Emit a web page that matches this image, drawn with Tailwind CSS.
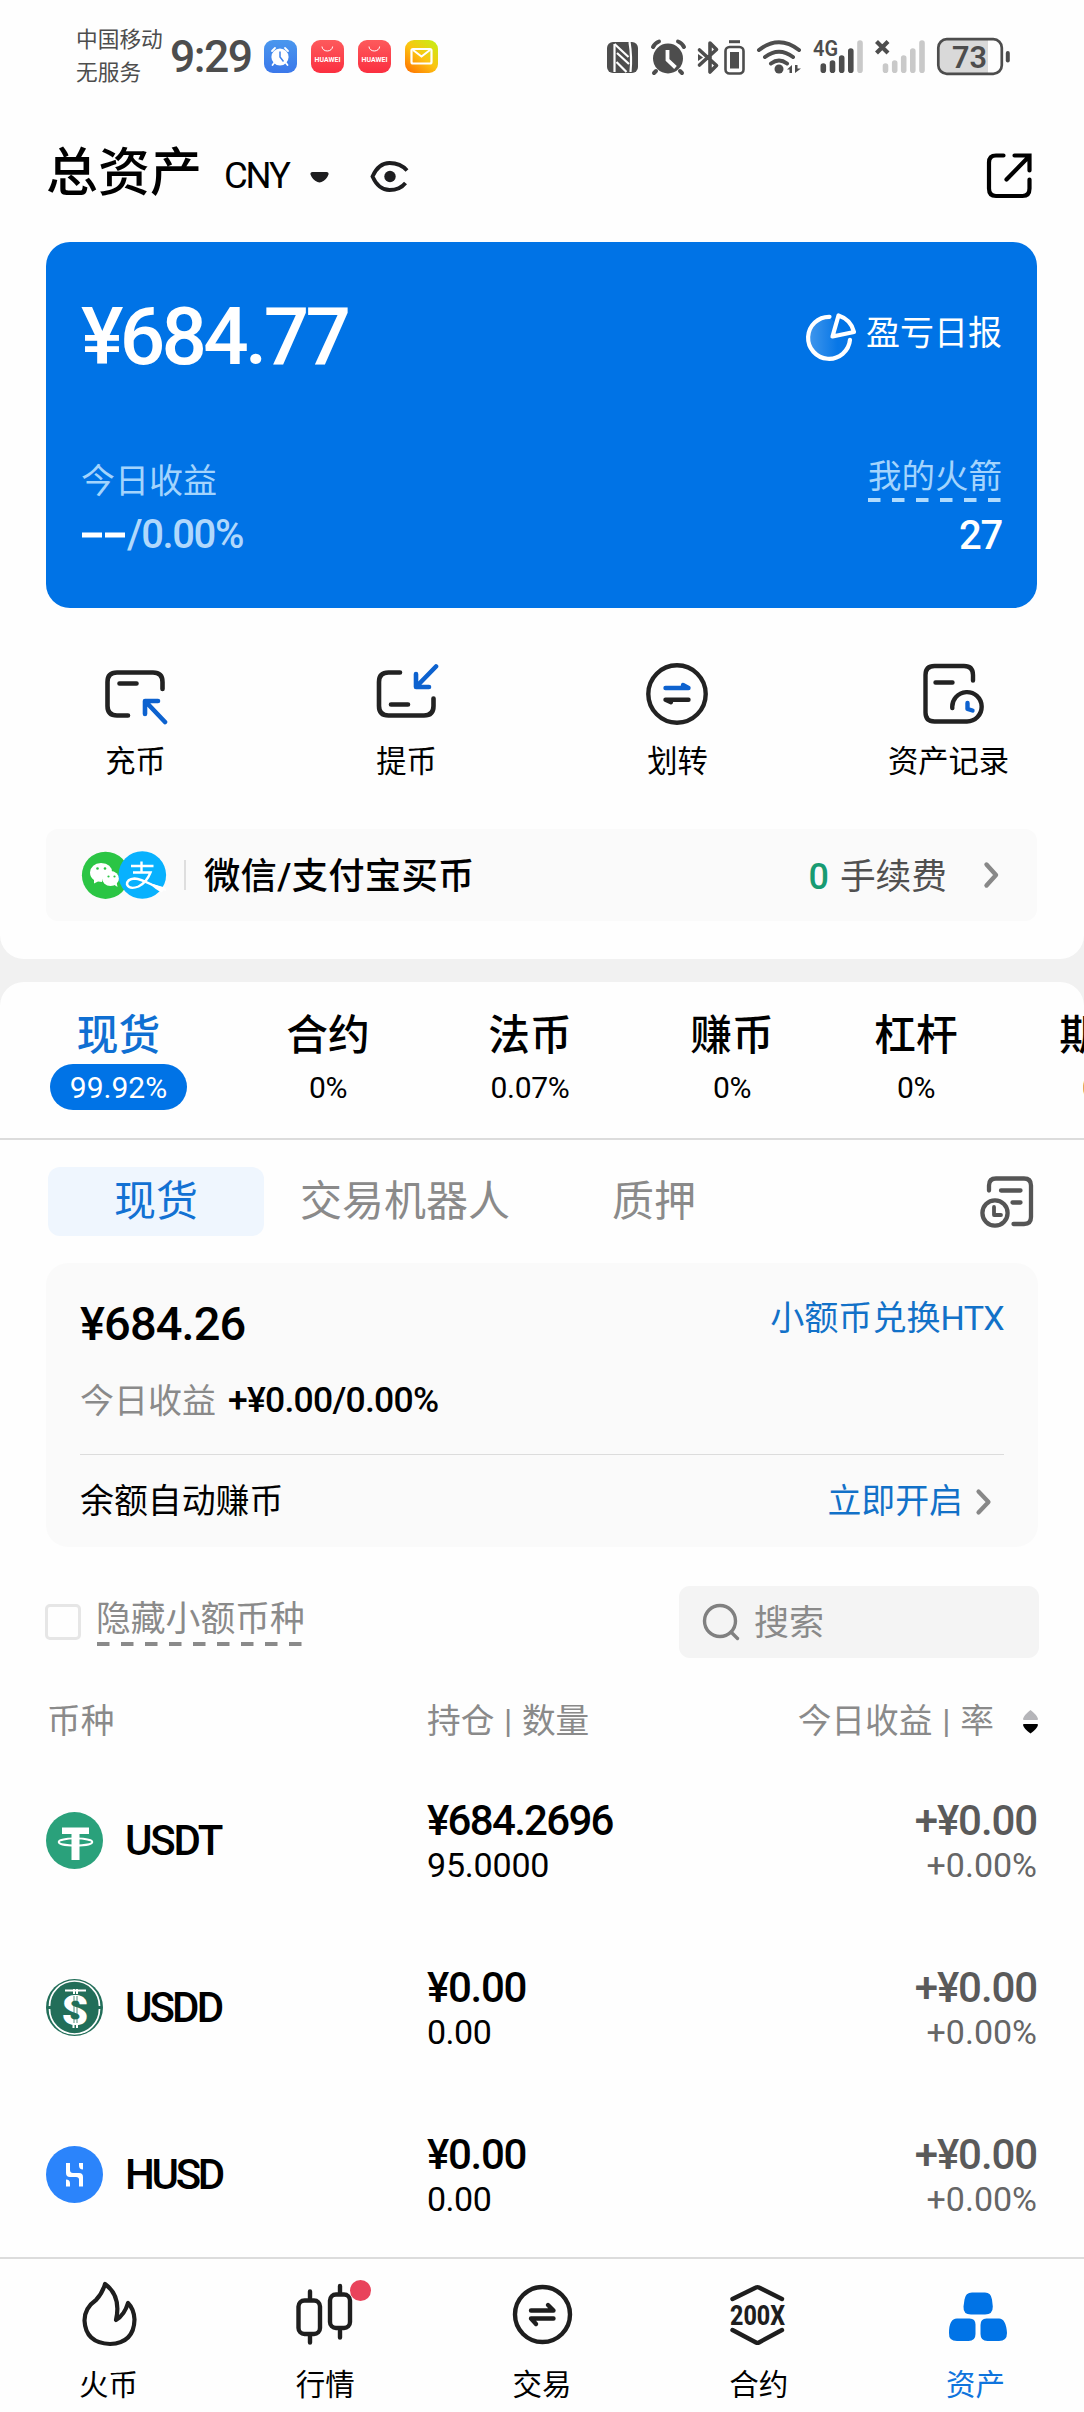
<!DOCTYPE html>
<html lang="zh-CN">
<head>
<meta charset="utf-8">
<title>总资产</title>
<script src="https://cdn.jsdelivr.net/npm/@tailwindcss/browser@4"></script>
</head>
<body class="bg-[#f1f1f1]">
<div class="flex h-[2412px] w-[1084px] flex-col overflow-hidden bg-[#f1f1f1] font-['Roboto','Noto_Sans_CJK_SC',sans-serif] whitespace-nowrap text-black">

  <!-- Overview panel -->
  <section class="flex h-[959px] flex-none flex-col rounded-b-[24px] bg-[#fefefe]">

    <!-- Status bar -->
    <div class="flex h-[113px] flex-none items-center pl-[76px] text-[#4d4d4d]">
      <div class="w-[94px] pb-[1px] text-[21.700px] leading-[33px]"><div>中国移动</div><div>无服务</div></div>
      <div class="w-[94px] pt-[2px] text-[44.500px] leading-none font-medium tracking-[-1.500px]">9:29</div>
      <div class="flex gap-[14px]">
        <svg class="size-[33px]" viewBox="0 0 33 33"><defs><linearGradient id="ck" x1="0" y1="0" x2="0" y2="1"><stop offset="0" stop-color="#4a97ee"/><stop offset="1" stop-color="#3b78ea"/></linearGradient></defs><rect width="33" height="33" rx="9" fill="url(#ck)"/><circle cx="16" cy="17" r="8.6" fill="#fff"/><path d="M8 11l3-3M24 11l-3-3M10 23l-1.500 2M22 23l1.500 2" stroke="#fff" stroke-width="1.800" stroke-linecap="round"/><path d="M16 11.500v5.500l3.500 4.500" fill="none" stroke="#3f83ec" stroke-width="1.500"/></svg>
        <svg class="size-[33px]" viewBox="0 0 33 33"><defs><linearGradient id="hw" x1="0" y1="0" x2="0" y2="1"><stop offset="0" stop-color="#fd5a5c"/><stop offset="1" stop-color="#fb2f40"/></linearGradient></defs><rect width="33" height="33" rx="9" fill="url(#hw)"/><path d="M11 6.500a5.300 4.500 0 0 0 10.600 0" fill="none" stroke="#fff" stroke-width="1"/><text x="3.500" y="21.500" textLength="26" lengthAdjust="spacingAndGlyphs" font-size="6.500" font-weight="700" fill="#fff">HUAWEI</text></svg>
        <svg class="size-[33px]" viewBox="0 0 33 33"><rect width="33" height="33" rx="9" fill="url(#hw)"/><path d="M11 6.500a5.300 4.500 0 0 0 10.600 0" fill="none" stroke="#fff" stroke-width="1"/><text x="3.500" y="21.500" textLength="26" lengthAdjust="spacingAndGlyphs" font-size="6.500" font-weight="700" fill="#fff">HUAWEI</text></svg>
        <svg class="size-[33px]" viewBox="0 0 33 33"><defs><linearGradient id="ml" x1="0.100" y1="1" x2="0.900" y2="0"><stop offset="0" stop-color="#ff7300"/><stop offset=".5" stop-color="#fcc412"/><stop offset="1" stop-color="#c6ee16"/></linearGradient></defs><rect width="33" height="33" rx="9" fill="url(#ml)"/><rect x="6.500" y="9" width="20" height="14.500" rx="1.500" fill="none" stroke="#fff" stroke-width="2.200"/><path d="M8 10l8.500 6.500L25 10" fill="none" stroke="#fff" stroke-width="2"/></svg>
      </div>
      <!-- Connectivity and battery -->
      <svg class="ml-[162px] h-[44px] w-[420px]" viewBox="600 34 420 44" fill="none">
        <rect x="607" y="41" width="31" height="31" rx="6" fill="#4d4d4d"/>
        <path d="M614.500 43v28M629.500 41q2.500 15 1 30" stroke="#fefefe" stroke-width="2.200"/>
        <path d="M614.500 43l14 13M617 52l12 11M616.500 61l10 10" stroke="#fefefe" stroke-width="2.200"/>
        <circle cx="668" cy="57.500" r="15" fill="#4d4d4d"/><path d="M653 46q2-4 6-5.500M684 46q-2-4-6-5.500M656 70l-2 2M680 70l2 2" stroke="#4d4d4d" stroke-width="4" stroke-linecap="round"/><path d="M667.500 49v10l8 7.500" stroke="#fefefe" stroke-width="3.800"/>
        <path d="M699.500 49l17 15.500-6.500 6.500v-29l6.500 6.500-17 15.500" stroke="#4d4d4d" stroke-width="3.600" stroke-linejoin="round" stroke-linecap="round"/><path d="M698 53l5 3.500-5 3.500z" fill="#4d4d4d"/>
        <path d="M729 40.700h11" stroke="#4d4d4d" stroke-width="3"/><rect x="725.500" y="46" width="18" height="26.500" rx="4" stroke="#4d4d4d" stroke-width="2.600"/><rect x="730" y="51" width="9" height="16.500" fill="#4d4d4d"/>
        <path d="M759 49q20-15.500 40 0M765 56q14-10.500 28 0M771 62.500q8-6 16 0" stroke="#4d4d4d" stroke-width="4" stroke-linecap="round"/><circle cx="779" cy="68" r="4.500" fill="#4d4d4d"/>
        <path d="M787 68.500l5-4.500v8h-2.500v-3.500zM795 64v8l6-4.500h-3.500v-3.500z" fill="#4d4d4d"/>
        <text x="813" y="55" textLength="25" lengthAdjust="spacingAndGlyphs" font-size="22.500" font-weight="600" fill="#4d4d4d">4G</text>
        <g stroke-width="5.600" stroke-linecap="round"><path d="M823.300 65v4.300M832.500 62v7.300M841.700 57v12.300M850.800 50v19.300" stroke="#4d4d4d"/><path d="M860 42v27.300M885.500 65v4.300M894.700 62v7.300M903.700 57v12.300M912.800 50v19.300M922 42v27.300" stroke="#c9c9c9"/></g>
        <path d="M876.500 40.500l11.500 11.500M888 40.500l-11.500 11.500" stroke="#4d4d4d" stroke-width="4.200"/>
        <path d="M988 39h-40q-9 0-9 9v15q0 9 9 9h40z" fill="#d9d9d9"/>
        <rect x="938.300" y="38.200" width="63.500" height="34.600" rx="8.500" stroke="#4d4d4d" stroke-width="2.700"/><path d="M1007.800 52v7.500" stroke="#4d4d4d" stroke-width="4" stroke-linecap="round"/>
        <text x="952" y="66.500" textLength="35" lengthAdjust="spacingAndGlyphs" font-size="31" font-weight="600" fill="#4d4d4d">73</text>
      </svg>
    </div>

    <!-- Title -->
    <header class="flex h-[124px] flex-none items-center pl-[46px]">
      <h1 class="w-[178px] pb-[3px] text-[52px] leading-[70px] font-medium">总资产</h1>
      <div class="w-[86px] pt-[2px] text-[36.500px] leading-[50px] tracking-[-2.200px]">CNY</div>
      <svg class="mt-[1px] h-[40px] w-[110px]" viewBox="310 155 110 40" fill="none"><path d="M312.500 171h14q2.500 0 2 2.500-2 5.500-7 7.500-2 .8-4 0-5-2-7-7.500-.5-2.500 2-2.500z" fill="#1d1d1f"/><path d="M407 169.500q-6.500-7.500-17.500-7.500t-17 13.500q6 13.500 17 13.500 10.500 0 16-7" stroke="#1d1d1f" stroke-width="3.800"/><circle cx="390" cy="175.500" r="5.700" fill="#1d1d1f"/></svg>
      <svg class="ml-[566px] h-[47px] w-[47px]" viewBox="986 152 47 47" fill="none" stroke="#000" stroke-width="4.200" stroke-linecap="round"><path d="M1003.500 155.500h-7.500q-7 0-7 7v26q0 7.500 7 7.500h26.500q7 0 7-7.500v-9M1014.500 155.500h15v15M1028.500 157l-22 22.500"/></svg>
    </header>

    <!-- Balance card -->
    <div class="mt-[5px] ml-[46px] h-[366px] w-[991px] flex-none rounded-[24px] bg-[#0073e6] px-[35px] pt-[55px] text-white">
      <div class="flex h-[80px] items-center justify-between">
        <div class="text-[80px] leading-[80px] font-medium tracking-[-3.700px]">¥684.77</div>
        <div class="flex items-center">
          <svg class="h-[50px] w-[52px]" viewBox="805 312 52 50" fill="none" stroke="#fff" stroke-width="4.200" stroke-linecap="round" stroke-linejoin="round"><defs><linearGradient id="pie"><stop offset="0" stop-color="#fff" stop-opacity=".26"/><stop offset=".7" stop-color="#fff" stop-opacity=".03"/></linearGradient></defs><path d="M829.500 316.800a21 21 0 1 0 20.500 23" fill="url(#pie)"/><path d="M838.500 315.500l-6 21 21.500-4.500q-3-12.500-15.500-16.500z"/></svg>
          <span class="ml-[9px] pb-[8px] text-[34px] leading-[40px]">盈亏日报</span>
        </div>
      </div>
      <div class="mt-[80px] flex justify-between">
        <div>
          <div class="pt-[4px] text-[34px] leading-[40px] text-[#a3d4fd]">今日收益</div>
          <div class="mt-[9px] flex h-[50px] items-center text-[40px] leading-[50px] font-medium tracking-[-1.400px] text-[#b0d8fc]"><svg class="mr-[1px] h-[6px] w-[45px]" viewBox="0 0 45 6"><path d="M1 3h20M24 3h20" stroke="#fff" stroke-width="5"/></svg>/0.00%</div>
        </div>
        <div class="flex flex-col items-end">
          <div class="text-[33.500px] leading-[40px] text-[#a3d4fd]">我的火箭</div>
          <svg class="mt-[1px] h-[4px] w-[134px]" viewBox="0 0 134 4"><path d="M0 2h134" stroke="#b0dbfd" stroke-width="4" stroke-dasharray="12.500 11.500"/></svg>
          <div class="mt-[9px] text-[40px] leading-[50px] font-medium tracking-[-1.200px]">27</div>
        </div>
      </div>
    </div>

    <!-- Actions -->
    <div class="mt-[55px] grid grid-cols-4 text-center text-[30.300px] leading-[40px]">
      <div class="flex flex-col items-center gap-[17px]"><svg class="h-[62px] w-[64px]" viewBox="104 663 64 62" fill="none" stroke="#222" stroke-width="4.600" stroke-linecap="round" stroke-linejoin="round"><path d="M128 715.500h-11q-9.500 0-9.500-9.500v-24q0-9.500 9.500-9.500h36q9.500 0 9.500 9.500v7M119.500 683.500h17"/><path d="M145 714v-13h13M146 702l19 20" stroke="#0d62cf"/></svg>充币</div>
      <div class="flex flex-col items-center gap-[17px]"><svg class="h-[62px] w-[64px]" viewBox="375 663 64 62" fill="none" stroke="#222" stroke-width="4.600" stroke-linecap="round" stroke-linejoin="round"><path d="M400 672.500h-11.500q-9.500 0-9.500 9.500v24q0 9.500 9.500 9.500h35.500q9.500 0 9.500-9.500v-7.500M391 704.500h17"/><path d="M416 674v13h13M417 686l19-19.500" stroke="#0d62cf"/></svg>提币</div>
      <div class="flex flex-col items-center gap-[17px]"><svg class="h-[62px] w-[64px]" viewBox="646 663 64 62" fill="none" stroke="#222" stroke-width="4.400" stroke-linecap="round" stroke-linejoin="round"><circle cx="677" cy="694" r="28.700"/><path d="M665.500 688h23l-5.500-3" stroke="#0d62cf"/><path d="M688.500 699.700h-23l5.500 2.500"/></svg>划转</div>
      <div class="flex flex-col items-center gap-[17px]"><svg class="h-[62px] w-[70px]" viewBox="913 663 70 62" fill="none" stroke="#222" stroke-width="4.400" stroke-linecap="round" stroke-linejoin="round"><path d="M972 680.500v-5.500q0-9-9-9h-29.500q-9 0-9 9v37.500q0 9 9 9h32.500a14.700 14.700 0 1 0-14.700-13.500M934.500 682.500h17"/><path d="M966.500 703v6l5 1.500" stroke="#0d62cf"/></svg>资产记录</div>
    </div>

    <!-- Buy banner -->
    <div class="mt-[47px] ml-[46px] flex h-[92px] w-[991px] flex-none items-center rounded-[12px] bg-[#fafafa] pl-[35px]">
      <svg class="h-[50px] w-[108px]" viewBox="81 850 108 50" fill="none">
        <circle cx="105.500" cy="875.300" r="23.600" fill="#2bc544"/>
        <path d="M101 863q11 .5 11 9.500-11 2-10 9.500l-4-.5-4 2v-3.500q-4-3-4-7.500 1-9 11-9.500z" fill="#fff"/>
        <ellipse cx="110.500" cy="878.500" rx="8.500" ry="7.500" fill="#fff"/><path d="M113 884l4.500 3-1-5z" fill="#fff"/>
        <circle cx="97.500" cy="868.500" r="1.300" fill="#2bc544"/><circle cx="105" cy="868.500" r="1.300" fill="#2bc544"/><circle cx="108.500" cy="876.500" r="1.100" fill="#2bc544"/><circle cx="114.500" cy="876.500" r="1.100" fill="#2bc544"/>
        <circle cx="142.300" cy="875" r="23.800" fill="#08b1fe"/>
        <path d="M141.500 861.500v10M131 866h22.500M133 872.500h17.500q-4 10-12 14-9 3.500-11.500-2 0-5.500 7.500-6 6 .5 17 6l14.500 5.500" stroke="#fff" stroke-width="2.400"/><path d="M149 883l16 4.500-3 5q-7-3-13-9.500z" fill="#fff"/>
        <path d="M185 860v30" stroke="#dedede" stroke-width="2"/>
      </svg>
      <span class="ml-[15px] pt-[3px] text-[36.300px] leading-[50px] font-medium tracking-[0.300px]">微信/支付宝买币</span>
      <span class="ml-auto pt-[3px] text-[36px] leading-[50px] font-medium text-[#179b72]">0</span>
      <span class="ml-[11px] pt-[3px] text-[35.700px] leading-[50px] text-[#505050]">手续费</span>
      <svg class="mr-[37px] ml-[36px] h-[28px] w-[17px]" viewBox="0 0 17 28" fill="none"><path d="M3.500 3.500l9.500 10.500-9.500 10.500" stroke="#888" stroke-width="4.400" stroke-linecap="round" stroke-linejoin="round"/></svg>
    </div>
  </section>

  <!-- Holdings panel -->
  <section class="mt-[23px] flex min-h-0 flex-1 flex-col rounded-t-[24px] bg-[#fefefe]">

    <!-- Account tabs -->
    <div class="flex h-[158px] flex-none overflow-hidden border-b-2 border-[#dcdcdc] pt-[29px] pl-[50px] text-center text-[41.700px] leading-[50px] font-medium">
      <div class="w-[137px] flex-none text-[#0f6fd2]">现货<div class="mt-[3px] h-[46px] rounded-full bg-[#0073e6] text-[30px] leading-[47px] font-normal text-white">99.92%</div></div>
      <div class="ml-[99px] w-[84px] flex-none">合约<div class="mt-[3px] text-[30px] leading-[47px] font-normal tracking-[-0.500px]">0%</div></div>
      <div class="ml-[118px] w-[84px] flex-none">法币<div class="mt-[3px] text-[30px] leading-[47px] font-normal tracking-[-0.300px]">0.07%</div></div>
      <div class="ml-[118px] w-[84px] flex-none">赚币<div class="mt-[3px] text-[30px] leading-[47px] font-normal tracking-[-0.500px]">0%</div></div>
      <div class="ml-[100px] w-[84px] flex-none">杠杆<div class="mt-[3px] text-[30px] leading-[47px] font-normal tracking-[-0.500px]">0%</div></div>
      <div class="ml-[101px] w-[84px] flex-none">期权<div class="mt-[3px] text-[30px] leading-[47px] font-normal tracking-[-0.500px]">0%</div></div>
    </div>

    <!-- Sub tabs -->
    <div class="mt-[27px] flex h-[69px] flex-none items-center pl-[48px] text-[42px] leading-[70px] text-[#8a8a8a]">
      <div class="h-[69px] w-[216px] rounded-[12px] bg-[#eff6fe] text-center text-[#1271d3]">现货</div>
      <div class="ml-[36px]">交易机器人</div>
      <div class="ml-[102px]">质押</div>
      <svg class="ml-auto mr-[50px] h-[54px] w-[55px]" viewBox="979 1175 55 54" fill="none" stroke="#555" stroke-width="4.300" stroke-linecap="round" stroke-linejoin="round"><path d="M989 1190.500v-5q0-7 7-7h28q7 0 7 7v31.500q0 7-7 7h-10.500M1001 1190.500h19.500M1012.500 1202.500h8"/><circle cx="995" cy="1213" r="12.600"/><path d="M994 1207v8h7" stroke-width="3.800"/></svg>
    </div>

    <!-- Spot summary -->
    <div class="mx-auto mt-[27px] h-[284px] w-[992px] flex-none rounded-[22px] bg-[#fafafa] px-[34px] pt-[36px]">
      <div class="flex h-[50px] justify-between">
        <div class="text-[47px] leading-[50px] font-medium tracking-[-0.900px]">¥684.26</div>
        <div class="text-[34.100px] leading-[39px] text-[#1271c8]">小额币兑换<span class="tracking-[-0.700px]">HTX</span></div>
      </div>
      <div class="mt-[26px] flex h-[50px] text-[34px] leading-[52px] text-[#8a8a8a]">今日收益<span class="ml-[12px] text-[35.500px] leading-[50px] font-medium tracking-[-0.750px] text-black">+¥0.00/0.00%</span></div>
      <div class="mt-[29px] flex h-[93px] items-center border-t border-[#dcdcdc] pt-[1px] text-[33.900px] leading-[50px]">
        <span>余额自动赚币</span><span class="ml-auto text-[#1271c8]">立即开启</span>
        <svg class="mr-[11px] ml-[11px] h-[28px] w-[19px]" viewBox="0 0 19 28" fill="none"><path d="M4.500 3.500l10 10.500-10 10.500" stroke="#888" stroke-width="4.200" stroke-linecap="round" stroke-linejoin="round"/></svg>
      </div>
    </div>

    <!-- Filter -->
    <div class="mt-[39px] flex h-[72px] flex-none items-center pr-[45px] pl-[45px] text-[34.800px] text-[#8a8a8a]">
      <div class="size-[36px] rounded-[5px] border-3 border-[#e6e6e6]"></div>
      <div class="ml-[15px] flex h-[48px] flex-col justify-between">
        <div class="leading-[43px]">隐藏小额币种</div>
        <svg class="h-[4px] w-[207px]" viewBox="0 0 207 4"><path d="M1 2h206" stroke="#8a8a8a" stroke-width="4" stroke-dasharray="12.500 11.500"/></svg>
      </div>
      <div class="ml-auto flex h-[72px] w-[360px] items-center rounded-[11px] bg-[#f4f4f4] pl-[23px] text-[35px] leading-[50px]">
        <svg class="size-[38px]" viewBox="0 0 38 38" fill="none" stroke="#808080" stroke-width="3.400" stroke-linecap="round"><circle cx="18" cy="18" r="15.500"/><path d="M29 29l6.500 6.500"/></svg>
        <span class="ml-[14px] pt-[3px]">搜索</span>
      </div>
    </div>

    <!-- Coin list -->
    <div class="mt-[44px] flex h-[40px] flex-none items-center pr-[45px] pl-[47px] text-[33.700px] leading-[40px] text-[#8a8a8a]">
      <div class="w-[380px]">币种</div><div class="[word-spacing:1.3px]">持仓 | 数量</div><div class="ml-auto [word-spacing:1.5px]">今日收益 | 率</div>
      <svg class="ml-[28px] h-[26px] w-[17px]" viewBox="0 0 17 26"><path d="M1 10q1-4 7.500-9 6.500 5 7.500 9 0 1-1 1H2q-1 0-1-1z" fill="#b5b5b9"/><path d="M1 16q1 4 7.500 8.500 6.500-4.500 7.500-8.500 0-1-1-1H2q-1 0-1 1z" fill="#000"/></svg>
    </div>
    <div class="min-h-0 flex-1 overflow-hidden pt-[15px]">
      <div class="flex h-[167px] items-center pr-[47px] pl-[46px]">
        <svg class="size-[57px]" viewBox="0 0 57 57"><circle cx="28.500" cy="28.500" r="28.500" fill="#2aa17b"/><ellipse cx="29.500" cy="30" rx="16.800" ry="3.600" fill="none" stroke="#fff" stroke-width="1.900"/><path d="M16 15.500h27v6.500h-9.500v26h-8v-26H16z" fill="#fff"/></svg>
        <div class="ml-[22px] w-[302px] text-[42px] leading-[50px] font-medium tracking-[-2.200px]">USDT</div>
        <div class="pt-[5px]"><div class="text-[42px] leading-[45px] font-medium tracking-[-1.700px]">¥684.2696</div><div class="text-[34px] leading-[45px] tracking-[-0.200px]">95.0000</div></div>
        <div class="ml-auto pt-[5px] text-right text-[#5a5a5a]"><div class="text-[42px] leading-[45px] font-medium tracking-[-1.100px]">+¥0.00</div><div class="text-[34px] leading-[45px] text-[#666]">+0.00%</div></div>
      </div>
      <div class="flex h-[167px] items-center pr-[47px] pl-[46px]">
        <svg class="size-[57px]" viewBox="0 0 57 57"><circle cx="28.500" cy="28.500" r="28.500" fill="#226e59"/><path d="M3.500 27a25 25 0 0 1 50 0M3.500 30a25 25 0 0 0 50 0" fill="none" stroke="#fff" stroke-width="1.700"/><path d="M19 11.500h21M28 10v5M31 10v5M27.500 44v5M31 44v5" stroke="#fff" stroke-width="2"/><text x="16" y="45.500" textLength="26" lengthAdjust="spacingAndGlyphs" font-size="42" font-weight="900" fill="#fff">S</text><path d="M28 17v27M31 17v27" stroke="#226e59" stroke-width=".8"/></svg>
        <div class="ml-[22px] w-[302px] text-[42px] leading-[50px] font-medium tracking-[-2.900px]">USDD</div>
        <div class="pt-[5px]"><div class="text-[42px] leading-[45px] font-medium tracking-[-1.300px]">¥0.00</div><div class="text-[34px] leading-[45px] tracking-[-0.500px]">0.00</div></div>
        <div class="ml-auto pt-[5px] text-right text-[#5a5a5a]"><div class="text-[42px] leading-[45px] font-medium tracking-[-1.100px]">+¥0.00</div><div class="text-[34px] leading-[45px] text-[#666]">+0.00%</div></div>
      </div>
      <div class="flex h-[167px] items-center pr-[47px] pl-[46px]">
        <svg class="size-[57px]" viewBox="0 0 57 57"><circle cx="28.500" cy="28.500" r="28.500" fill="#2b84fb"/><path d="M20 17h4v7q0 3 3 3h6q4 0 4 4v9.500h-4v-7q0-2.500-3-2.500h-6q-4 0-4-4zM33 17h4v6.500q-4 0-4-4zM20 33.500q4 0 4 4v3h-4z" fill="#fff"/></svg>
        <div class="ml-[22px] w-[302px] text-[42px] leading-[50px] font-medium tracking-[-3.300px]">HUSD</div>
        <div class="pt-[5px]"><div class="text-[42px] leading-[45px] font-medium tracking-[-1.300px]">¥0.00</div><div class="text-[34px] leading-[45px] tracking-[-0.500px]">0.00</div></div>
        <div class="ml-auto pt-[5px] text-right text-[#5a5a5a]"><div class="text-[42px] leading-[45px] font-medium tracking-[-1.100px]">+¥0.00</div><div class="text-[34px] leading-[45px] text-[#666]">+0.00%</div></div>
      </div>
    </div>

    <!-- Bottom navigation -->
    <nav class="grid h-[155px] flex-none grid-cols-5 border-t-2 border-[#dcdcdc] pt-[20px] text-center text-[29.500px] leading-[40px]">
      <div class="flex flex-col items-center gap-[18px]"><svg class="h-[68px] w-[100px]" viewBox="58 2278 100 68" fill="none" stroke="#1e1e1e" stroke-width="4.200" stroke-linejoin="round"><path d="M105 2283q-2.500 9-9 16-11.500 8-11.500 20.500 1 22.500 25.500 23.500 24-1 24.500-24.500-.5-10.500-6.500-16.500-3.500 12-12 17 5.500-24-11-36z"/></svg>火币</div>
      <div class="flex flex-col items-center gap-[18px]"><svg class="h-[68px] w-[100px]" viewBox="275 2278 100 68" fill="none" stroke="#1e1e1e" stroke-width="4.400" stroke-linecap="round"><rect x="298.500" y="2299.500" width="21.500" height="33.500" rx="6"/><path d="M310 2290.500v7M310 2335v6.500"/><rect x="330" y="2293.500" width="20" height="33.500" rx="6"/><path d="M340 2285v7M340 2329.500v7"/><circle cx="360.500" cy="2289.500" r="10.500" fill="#e9435b" stroke="none"/></svg>行情</div>
      <div class="flex flex-col items-center gap-[18px]"><svg class="h-[68px] w-[100px]" viewBox="492 2278 100 68" fill="none" stroke="#1e1e1e" stroke-width="4.400" stroke-linecap="round" stroke-linejoin="round"><circle cx="542.500" cy="2313.500" r="27.500"/><path d="M531 2309.500h22.500l-5.500-5.500M553.500 2317.500H531l5 5.500"/></svg>交易</div>
      <div class="flex flex-col items-center gap-[18px]"><svg class="h-[68px] w-[100px]" viewBox="709 2278 100 68" fill="none" stroke="#1e1e1e" stroke-width="4.400" stroke-linecap="round" stroke-linejoin="round"><path d="M732.500 2298l23.500-11.500q1.500-.8 3 0l23 11.500M732.500 2329l23.500 12.500q1.500.8 3 0l23-12.500"/><text x="730" y="2323.500" textLength="55" lengthAdjust="spacingAndGlyphs" font-size="27.500" font-weight="800" fill="#1e1e1e" stroke="none">200X</text></svg>合约</div>
      <div class="flex flex-col items-center gap-[18px] text-[#0f74dd]"><svg class="h-[68px] w-[100px]" viewBox="926 2278 100 68" fill="#0073e6"><path d="M972 2291.500h13q6 0 7 7l.8 7q.2 8-7.800 8h-14q-8 0-7.500-8l1-7q1-7 7.500-7zM957 2317.500h12.500q6 0 6 6v9.500q0 7-7 7h-11.500q-8.500 0-8-8 0-14.500 8-14.500zM986.500 2317.500H999q7 0 8 14.500 0 8-8 8h-11.500q-7 0-7-7v-9q0-6.500 6-6.500z"/></svg>资产</div>
    </nav>
  </section>
</div>
</body>
</html>
